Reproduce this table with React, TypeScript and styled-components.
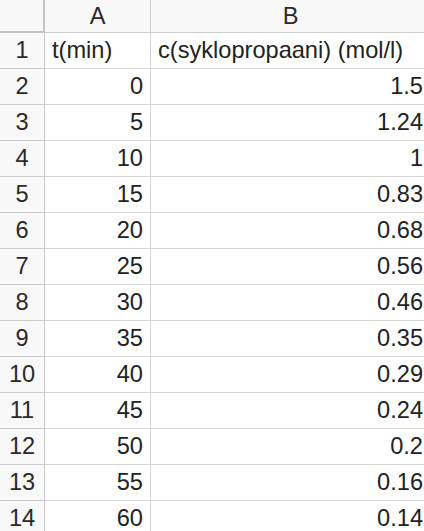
import styled, { createGlobalStyle } from "styled-components"

const GlobalStyle = createGlobalStyle`
  html, body {
    margin: 0;
    padding: 0;
    background: #ffffff;
    overflow: hidden;
  }
`

const Sheet = styled.div`
  display: grid;
  grid-template-columns: 45px 106px 280px;
  grid-template-rows: 33px;
  grid-auto-rows: 36px;
  width: 431px;
  font-family: "Liberation Sans", Arial, sans-serif;
  font-size: 23.6px;
  color: #222222;
`

const Cell = styled.div<{ $align?: "left" | "right" | "center" }>`
  display: flex;
  align-items: center;
  justify-content: ${(p) =>
    p.$align === "right" ? "flex-end" : p.$align === "center" ? "center" : "flex-start"};
  padding: 0 7px 0 7px;
  border-right: 1px solid #d6d6d6;
  border-bottom: 1px solid #d6d6d6;
  background: #ffffff;
  white-space: nowrap;
  overflow: hidden;
  box-sizing: border-box;
`

const HeaderCell = styled(Cell)`
  background: #f8f8f8;
  color: #2a2a2a;
  border-color: #cccccc;
  padding: 0;
`

const Corner = styled.div`
  background: #f8f8f8;
  border-right: 2px solid #c4c4c4;
  border-bottom: 2px solid #c4c4c4;
  box-sizing: border-box;
`

const rows: [string, string][] = [
  ["0", "1.5"],
  ["5", "1.24"],
  ["10", "1"],
  ["15", "0.83"],
  ["20", "0.68"],
  ["25", "0.56"],
  ["30", "0.46"],
  ["35", "0.35"],
  ["40", "0.29"],
  ["45", "0.24"],
  ["50", "0.2"],
  ["55", "0.16"],
  ["60", "0.14"],
]

export default function App() {
  return (
    <>
      <GlobalStyle />
      <Sheet>
        <Corner />
        <HeaderCell $align="center">A</HeaderCell>
        <HeaderCell $align="center">B</HeaderCell>

        <HeaderCell $align="center">1</HeaderCell>
        <Cell>t(min)</Cell>
        <Cell>c(syklopropaani) (mol/l)</Cell>

        {rows.map(([t, c], i) => (
          <RowCells key={t} index={i + 2} t={t} c={c} />
        ))}
      </Sheet>
    </>
  )
}

function RowCells({ index, t, c }: { index: number; t: string; c: string }) {
  return (
    <>
      <HeaderCell $align="center">{index}</HeaderCell>
      <Cell $align="right">{t}</Cell>
      <Cell $align="right">{c}</Cell>
    </>
  )
}
